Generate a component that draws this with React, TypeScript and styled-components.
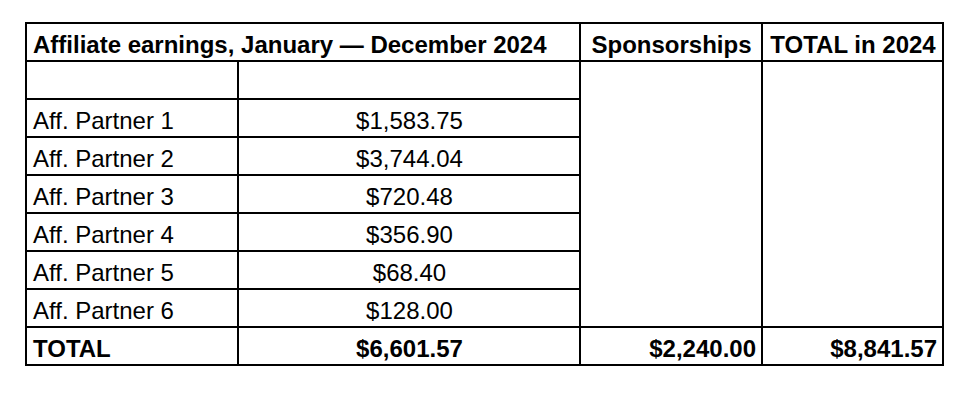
import React from "react";
import styled, { createGlobalStyle } from "styled-components";

const Global = createGlobalStyle`
  html, body { margin: 0; padding: 0; background: #ffffff; }
  body { font-family: "Liberation Sans", Arial, sans-serif; color: #000; }
`;

const Page = styled.div`
  padding: 22px 0 0 25px;
`;

const Table = styled.table`
  border-collapse: collapse;
  table-layout: fixed;
  width: 917px;
  font-family: "Liberation Sans", Arial, sans-serif;
  font-size: 24px;
  color: #000;
`;

const Row = styled.tr`
  height: 38px;
`;

const Cell = styled.td<{ $align?: "left" | "center" | "right"; $bold?: boolean }>`
  border: 2px solid #000;
  padding: 0 5px 1px 6px;
  vertical-align: bottom;
  text-align: ${(p) => p.$align ?? "left"};
  font-weight: ${(p) => (p.$bold ? 700 : 400)};
  white-space: nowrap;
  overflow: visible;
  line-height: normal;
`;

const partners = [
  ["Aff. Partner 1", "$1,583.75"],
  ["Aff. Partner 2", "$3,744.04"],
  ["Aff. Partner 3", "$720.48"],
  ["Aff. Partner 4", "$356.90"],
  ["Aff. Partner 5", "$68.40"],
  ["Aff. Partner 6", "$128.00"],
];

export default function App() {
  return (
    <>
      <Global />
      <Page>
        <Table>
          <colgroup>
            <col style={{ width: 212 }} />
            <col style={{ width: 342 }} />
            <col style={{ width: 182 }} />
            <col style={{ width: 181 }} />
          </colgroup>
          <tbody>
            <Row>
              <Cell colSpan={2} $bold>
                Affiliate earnings, January — December 2024
              </Cell>
              <Cell $bold $align="center">Sponsorships</Cell>
              <Cell $bold $align="center">TOTAL in 2024</Cell>
            </Row>
            <Row>
              <Cell />
              <Cell />
              <Cell rowSpan={7} />
              <Cell rowSpan={7} />
            </Row>
            {partners.map(([name, amount]) => (
              <Row key={name}>
                <Cell>{name}</Cell>
                <Cell $align="center">{amount}</Cell>
              </Row>
            ))}
            <Row>
              <Cell $bold>TOTAL</Cell>
              <Cell $bold $align="center">$6,601.57</Cell>
              <Cell $bold $align="right">$2,240.00</Cell>
              <Cell $bold $align="right">$8,841.57</Cell>
            </Row>
          </tbody>
        </Table>
      </Page>
    </>
  );
}
